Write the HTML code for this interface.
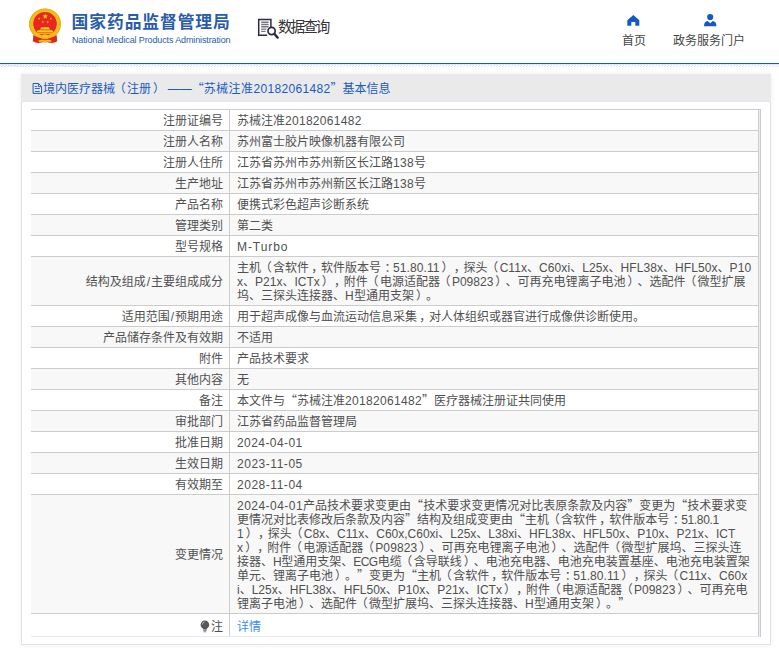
<!DOCTYPE html>
<html lang="zh-CN"><head><meta charset="utf-8"><title>国家药品监督管理局 数据查询</title>
<style>
*{box-sizing:border-box}
html,body{margin:0;padding:0;background:#fff}
body{width:779px;height:663px;overflow:hidden;position:relative;font-family:"Liberation Sans","Noto Sans CJK SC",sans-serif;font-size:12px;color:#505050}
.hd{position:absolute;left:0;top:0;width:779px;height:63px;background:#fff}
.bl{position:absolute;left:0;top:63px;width:779px;height:1px;background:#0f5ec4;box-shadow:0 .5px 0 rgba(15,94,196,.25)}
.hatch{position:absolute;left:0;top:65px;width:779px;height:2px;background:repeating-linear-gradient(135deg,#e4e2e0 0,#e4e2e0 .75px,#fff .75px,#fff 2.12px)}
.emb{position:absolute;left:24px;top:4px}
.t1{position:absolute;left:71.6px;top:10.1px;font-size:16.8px;letter-spacing:.9px;line-height:26px;font-weight:bold;color:#2a5caa;white-space:nowrap}
.t2{position:absolute;left:72px;top:34px;font-size:9px;letter-spacing:-.13px;line-height:12px;color:#2a5caa;white-space:nowrap}
.q{position:absolute;left:277.7px;top:16.4px;font-size:15px;line-height:22px;letter-spacing:-2px;transform:scaleX(.97);transform-origin:0 0;color:#333;white-space:nowrap}
.qi{position:absolute;left:257px;top:17px}
.di{position:absolute;left:10px;top:8px}
.nav{position:absolute;top:32px;font-size:12px;line-height:18px;color:#444;white-space:nowrap}
.ni{position:absolute}
.panel{position:absolute;left:21px;top:74px;width:750px;height:571px;background:#fff;border:1px solid #e3e3e3;box-shadow:0 0 5px rgba(0,0,0,.07)}
.ph{position:absolute;left:-1px;top:-1px;width:750px;height:28px;border-bottom:1px solid #e3e8f5;background:#eaeaea;color:#1c5ac0;font-size:12px;line-height:28px;white-space:nowrap}
.ph>span{position:absolute;left:22px;top:1px}
.tw{position:absolute;left:9px;top:34px;width:730px}
table.t{border-collapse:separate;border-spacing:0;width:730px;padding-right:1px;background:#e9edf8;border-top:1px solid #ccc;border-right:1px solid #ccc;table-layout:fixed}
td{background:#fff;padding:4px 6px 2px;text-spacing-trim:space-all;line-height:14px;border-bottom:1px solid #ccc;vertical-align:middle;font-size:12px}
td.k{width:199px;text-align:right;border-right:1px solid #ccc;white-space:nowrap}
td.v{border-right:1px solid #ccc;text-align:left;padding-left:7px}
tr.g td{background:#f8f8f8}
.ln{display:block;white-space:nowrap;height:14px}
i{font-style:normal;letter-spacing:var(--s,.33px)}
span.a,span.b,span.c,span.d{position:relative}
span.a{left:-1.3px}span.b{left:2px}span.c{left:2.2px}span.d{left:3.5px}
em{font-style:normal;line-height:0;font-family:"Noto Sans CJK SC",sans-serif}
a{color:#3a8ee6}
svg.bulb{vertical-align:-2px;margin-right:.5px}
tr.last td{height:23px;padding-top:5px;border-bottom:1px solid #e6e9f5}
</style></head><body>
<div class="hd"></div><div class="bl"></div><div class="hatch"></div>
<svg class="emb" width="42" height="44" viewBox="24 4 42 44">
<ellipse cx="45" cy="24" rx="14" ry="13.5" fill="none" stroke="#f3bd16" stroke-width="4"/>
<ellipse cx="45" cy="24" rx="15.6" ry="15.1" fill="none" stroke="#eaa512" stroke-width=".7"/>
<circle cx="45" cy="23.8" r="11.9" fill="#e8271e"/>
<polygon points="45.20,13.40 45.88,15.36 47.96,15.40 46.30,16.66 46.90,18.65 45.20,17.46 43.50,18.65 44.10,16.66 42.44,15.40 44.52,15.36" fill="#f8d61c"/>
<polygon points="39.75,17.57 39.58,18.49 40.37,18.97 39.45,19.09 39.24,19.99 38.84,19.15 37.91,19.23 38.59,18.59 38.23,17.73 39.05,18.18" fill="#f8d61c"/>
<polygon points="50.25,17.57 50.95,18.18 51.77,17.73 51.41,18.59 52.09,19.23 51.16,19.15 50.76,19.99 50.55,19.09 49.63,18.97 50.42,18.49" fill="#f8d61c"/>
<polygon points="43.24,20.78 43.23,21.71 44.10,22.05 43.21,22.32 43.16,23.25 42.62,22.49 41.72,22.73 42.28,21.98 41.78,21.20 42.66,21.50" fill="#f8d61c"/>
<polygon points="47.16,20.78 47.74,21.50 48.62,21.20 48.12,21.98 48.68,22.73 47.78,22.49 47.24,23.25 47.19,22.32 46.30,22.05 47.17,21.71" fill="#f8d61c"/>
<path d="M40 29.4 L41.2 27.3 L48.8 27.3 L50 29.4 Z M36.4 32.5 L37.6 30.2 L52.4 30.2 L53.6 32.5 Z" fill="#f8d01e"/>
<rect x="38" y="33.2" width="14" height="0.9" fill="#f8d01e"/>
<path d="M33.4 35 Q36.5 37.6 41.8 38.4 L42.4 42.2 Q36.5 44 32.8 41.2 Z M56.6 35 Q53.5 37.6 48.2 38.4 L47.6 42.2 Q53.5 44 57.2 41.2 Z" fill="#dc281c"/>
<path d="M41.8 38.4 H48.2 L47.6 42.2 H42.4 Z" fill="#e23a1c"/>
<ellipse cx="45" cy="36.7" rx="3.5" ry="2.2" fill="#f5c518" stroke="#e9a414" stroke-width=".5"/>
<path d="M38.2 40.8 Q41.6 38.9 45 40.6 Q48.4 38.9 51.8 40.8 L50.8 42.1 Q47.6 40.9 45 42.2 Q42.4 40.9 39.2 42.1 Z" fill="#f5c518"/>
</svg>
<div class="t1" id="t1">国家药品监督管理局</div>
<div class="t2" id="t2">National Medical Products Administration</div>
<svg class="qi" width="22" height="22" viewBox="257 17 22 22">
<path d="M270.9 27.2 V19.4 H258.7 V35.2 H267.2" fill="none" stroke="#2b2b42" stroke-width="1.5"/>
<path d="M261.2 22.2 H268.6 M261.2 24.5 H268.6 M261.2 26.8 H268.6 M261.2 29.1 H266.4 M261.2 31.4 H265.6" stroke="#77777f" stroke-width="1.4"/>
<circle cx="271.6" cy="31" r="3.6" fill="#fff" stroke="#2b2b42" stroke-width="1.7"/>
<path d="M274.3 33.8 L277.6 37.6" stroke="#2b2b42" stroke-width="2.4" stroke-linecap="round"/>
</svg>
<div class="q" id="q">数据查询</div>
<svg class="ni" style="left:626px;top:14px" width="14" height="13" viewBox="626 14 14 13">
<path d="M633.3 15 L639.3 20.3 V25.8 H635.3 V22 H631.3 V25.8 H627.3 V20.3 Z" fill="#1259c7"/></svg>
<svg class="ni" style="left:703px;top:13px" width="15" height="14" viewBox="703 13 15 14">
<circle cx="710.2" cy="17" r="3.1" fill="#1259c7"/>
<path d="M704 26.2 Q704 21.5 707.6 21 L710.2 23.3 L712.8 21 Q716.4 21.5 716.4 26.2 Z" fill="#1259c7"/></svg>
<div class="nav" id="n1" style="left:622px">首页</div>
<div class="nav" id="n2" style="left:673px">政务服务门户</div>
<div class="panel"><div class="ph"><svg class="di" width="12" height="13" viewBox="31 82 12 13">
<path d="M33.1 83.5 H38.6 L41.6 86.5 V93.4 H33.1 Z M38.4 83.7 V86.7 H41.4" fill="none" stroke="#1c5ac0" stroke-width="1"/>
<path d="M34.8 86.5 H37 M34.8 88.5 H39.8 M34.8 91.5 H39.8" stroke="#1c5ac0" stroke-width="0.9"/></svg><span id="pt">境内医疗器械<span class="a">（</span>注册<span class="b">）</span><i style="--s:1.25px"> </i>——<em>“</em><i style="--s:.44px">苏械注准</i><i>20182061482</i><em>”</em>基本信息</span></div>
<div class="tw">

<table class="t" cellspacing="0" cellpadding="0">
<tr><td class="k"><span id="k0">注册证编号</span></td><td class="v"><span class="ln" id="r0_0" style="--s:0.29px">苏械注准<i>20182061482</i></span></td></tr>
<tr class="g"><td class="k"><span id="k1">注册人名称</span></td><td class="v"><span class="ln" id="r1_0">苏州富士胶片映像机器有限公司</span></td></tr>
<tr><td class="k"><span id="k2">注册人住所</span></td><td class="v"><span class="ln" id="r2_0" style="--s:0.33px">江苏省苏州市苏州新区长江路<i>138</i>号</span></td></tr>
<tr class="g"><td class="k"><span id="k3">生产地址</span></td><td class="v"><span class="ln" id="r3_0" style="--s:0.33px">江苏省苏州市苏州新区长江路<i>138</i>号</span></td></tr>
<tr><td class="k"><span id="k4">产品名称</span></td><td class="v"><span class="ln" id="r4_0">便携式彩色超声诊断系统</span></td></tr>
<tr class="g"><td class="k"><span id="k5">管理类别</span></td><td class="v"><span class="ln" id="r5_0">第二类</span></td></tr>
<tr><td class="k"><span id="k6">型号规格</span></td><td class="v"><span class="ln" id="r6_0" style="--s:0.93px"><i>M-Turbo</i></span></td></tr>
<tr class="g"><td class="k"><span id="k7">结构及组成<i style="--s:1px;margin-left:1px">/</i>主要组成成分</span></td><td class="v"><span class="ln" id="r7_0" style="--s:0.08px">主机<span class="a">（</span>含软件<span class="c">，</span>软件版本号<span class="d">：</span><i>51.80.11</i><span class="b">）</span><span class="c">，</span>探头<span class="a">（</span><i>C11x</i>、<i>C60xi</i>、<i>L25x</i>、<i>HFL38x</i>、<i>HFL50x</i>、<i>P10</i></span><span class="ln" id="r7_1" style="--s:0.01px"><i>x</i>、<i>P21x</i>、<i>ICTx</i><span class="b">）</span><span class="c">，</span>附件<span class="a">（</span>电源适配器<span class="a">（</span><i>P09823</i><span class="b">）</span>、可再充电锂离子电池<span class="b">）</span>、选配件<span class="a">（</span>微型扩展</span><span class="ln" id="r7_2" style="--s:0.33px">坞、三探头连接器、<i>H</i>型通用支架<span class="b">）</span>。</span></td></tr>
<tr><td class="k"><span id="k8">适用范围<i style="--s:1px;margin-left:1px">/</i>预期用途</span></td><td class="v"><span class="ln" id="r8_0">用于超声成像与血流运动信息采集<span class="c">，</span>对人体组织或器官进行成像供诊断使用。</span></td></tr>
<tr class="g"><td class="k"><span id="k9">产品储存条件及有效期</span></td><td class="v"><span class="ln" id="r9_0">不适用</span></td></tr>
<tr><td class="k"><span id="k10">附件</span></td><td class="v"><span class="ln" id="r10_0">产品技术要求</span></td></tr>
<tr class="g"><td class="k"><span id="k11">其他内容</span></td><td class="v"><span class="ln" id="r11_0">无</span></td></tr>
<tr><td class="k"><span id="k12">备注</span></td><td class="v"><span class="ln" id="r12_0" style="--s:0.33px">本文件与<em>“</em>苏械注准<i>20182061482</i><em>”</em>医疗器械注册证共同使用</span></td></tr>
<tr class="g"><td class="k"><span id="k13">审批部门</span></td><td class="v"><span class="ln" id="r13_0">江苏省药品监督管理局</span></td></tr>
<tr><td class="k"><span id="k14">批准日期</span></td><td class="v"><span class="ln" id="r14_0" style="--s:0.43px"><i>2024-04-01</i></span></td></tr>
<tr class="g"><td class="k"><span id="k15">生效日期</span></td><td class="v"><span class="ln" id="r15_0" style="--s:0.53px"><i>2023-11-05</i></span></td></tr>
<tr><td class="k"><span id="k16">有效期至</span></td><td class="v"><span class="ln" id="r16_0" style="--s:0.53px"><i>2028-11-04</i></span></td></tr>
<tr class="g"><td class="k"><span id="k17">变更情况</span></td><td class="v"><span class="ln" id="r17_0" style="--s:0.47px"><i>2024-04-01</i>产品技术要求变更由<em>“</em>技术要求变更情况对比表原条款及内容<em>”</em>变更为<em>“</em>技术要求变</span><span class="ln" id="r17_1" style="--s:-0.33px">更情况对比表修改后条款及内容<em>”</em>结构及组成变更由<em>“</em>主机<span class="a">（</span>含软件<span class="c">，</span>软件版本号<span class="d">：</span><i>51.80.1</i></span><span class="ln" id="r17_2" style="--s:-0.00px"><i>1</i><span class="b">）</span><span class="c">，</span>探头<span class="a">（</span><i>C8x</i>、<i>C11x</i>、<i>C60x,C60xi</i>、<i>L25x</i>、<i>L38xi</i>、<i>HFL38x</i>、<i>HFL50x</i>、<i>P10x</i>、<i>P21x</i>、<i>ICT</i></span><span class="ln" id="r17_3" style="--s:0.13px"><i>x</i><span class="b">）</span><span class="c">，</span>附件<span class="a">（</span>电源适配器<span class="a">（</span><i>P09823</i><span class="b">）</span>、可再充电锂离子电池<span class="b">）</span>、选配件<span class="a">（</span>微型扩展坞、三探头连</span><span class="ln" id="r17_4" style="--s:-0.52px">接器、<i>H</i>型通用支架、<i>ECG</i>电缆<span class="a">（</span>含导联线<span class="b">）</span>、电池充电器、电池充电装置基座、电池充电装置架</span><span class="ln" id="r17_5" style="--s:0.06px">单元、锂离子电池<span class="b">）</span>。<em>”</em>变更为<em>“</em>主机<span class="a">（</span>含软件<span class="c">，</span>软件版本号<span class="d">：</span><i>51.80.11</i><span class="b">）</span><span class="c">，</span>探头<span class="a">（</span><i>C11x</i>、<i>C60x</i></span><span class="ln" id="r17_6" style="--s:-0.00px"><i>i</i>、<i>L25x</i>、<i>HFL38x</i>、<i>HFL50x</i>、<i>P10x</i>、<i>P21x</i>、<i>ICTx</i><span class="b">）</span><span class="c">，</span>附件<span class="a">（</span>电源适配器<span class="a">（</span><i>P09823</i><span class="b">）</span>、可再充电</span><span class="ln" id="r17_7" style="--s:0.33px">锂离子电池<span class="b">）</span>、选配件<span class="a">（</span>微型扩展坞、三探头连接器、<i>H</i>型通用支架<span class="b">）</span>。<em>”</em></span></td></tr>
<tr class="last"><td class="k"><span id="k19"><svg class="bulb" width="10" height="13" viewBox="0 0 10 13"><circle cx="4.9" cy="4.7" r="4.3" fill="#58585c"/><path d="M3 8 H6.8 V9.6 H3 Z" fill="#58585c"/><path d="M3.2 10.6 H6.6 M3.6 11.8 H6.2" stroke="#77777c" stroke-width=".9"/><path d="M2.2 4.6 A2.8 2.8 0 0 1 4.6 2" fill="none" stroke="#c9c9cf" stroke-width=".8"/></svg>注</span></td><td class="v"><span class="ln"><a>详情</a></span></td></tr>
</table></div></div></body></html>
